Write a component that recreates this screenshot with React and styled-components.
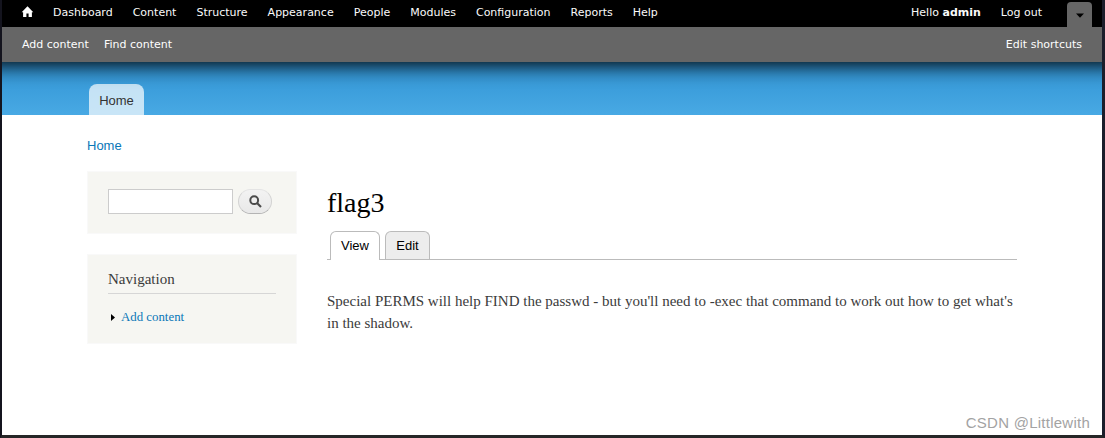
import React from "react";
import styled, { createGlobalStyle } from "styled-components";

const Global = createGlobalStyle`
  * { box-sizing: border-box; }
  body { margin: 0; background: #222226; }
  a { text-decoration: none; color: inherit; }
`;

const Frame = styled.div`
  position: relative;
  width: 1105px;
  height: 438px;
  overflow: hidden;
  border-style: solid;
  border-width: 0 3px 3px 2px;
  border-color: #222 #1b1e2b #262627 #14141e;
  background: #fff;
  color: #3b3b3b;
  font-family: "Liberation Serif", serif;
`;

const Toolbar = styled.div`
  position: relative;
  z-index: 1;
  margin: 0 -20px;
  font: 11px/14px "DejaVu Sans", sans-serif;
  box-shadow: 0 3px 20px #000;
`;

const MenuBar = styled.nav`
  display: flex;
  align-items: flex-start;
  height: 27px;
  padding: 6px 30px 0 39px;
  background: #000;
  color: #fafafa;
`;

const HomeLink = styled.a`
  display: flex;
  width: 13px;
  height: 14px;
  margin-right: 9px;
`;

const MenuLink = styled.a`
  padding: 0 10px;
`;

const UserLinks = styled.div`
  display: flex;
  margin-left: auto;
`;

const DrawerToggle = styled.a`
  display: flex;
  align-items: center;
  justify-content: center;
  width: 25px;
  height: 25px;
  margin: -4px 0 0 15px;
  padding-top: 2px;
  border-radius: 4px 4px 0 0;
  background: #666;
`;

const ShortcutBar = styled.div`
  display: flex;
  gap: 15px;
  height: 35px;
  padding: 11px 40px 0;
  background: #666;
  color: #fefefe;
`;

const EditShortcuts = styled.a`
  margin-left: auto;
`;

const Header = styled.header`
  display: flex;
  align-items: flex-end;
  height: 53px;
  padding-left: 87px;
  background: linear-gradient(#3093d3, #48a9e4);
`;

const MainTab = styled.a`
  width: 55px;
  height: 31px;
  border-radius: 8px 8px 0 0;
  background: rgba(255, 255, 255, 0.7);
  color: #333;
  text-align: center;
  font: 13px/33px "Liberation Sans", sans-serif;
`;

const Breadcrumb = styled.div`
  padding: 22px 0 0 85px;
  height: 56px;
  color: #0a77b8;
  font: 13px/17px "Liberation Sans", sans-serif;
`;

const Columns = styled.div`
  display: flex;
  gap: 30px;
  padding-left: 85px;
`;

const Sidebar = styled.aside`
  display: flex;
  flex-direction: column;
  gap: 20px;
  width: 210px;
`;

const Block = styled.section`
  height: ${(p) => p.$height}px;
  padding: ${(p) => p.$top}px 20px 0;
  border: 1px solid #f9f9f9;
  background: #f6f6f2;
`;

const SearchForm = styled.form`
  display: flex;
  gap: 5px;
`;

const SearchInput = styled.input`
  width: 125px;
  height: 25px;
  padding: 4px;
  border: 1px solid #ccc;
  border-radius: 0;
  background: #fff;
  outline: none;
`;

const SearchButton = styled.button`
  display: flex;
  align-items: center;
  justify-content: center;
  width: 34px;
  height: 25px;
  padding: 0;
  border: 1px solid #e4e4e4;
  border-bottom-color: #b4b4b4;
  border-left-color: #d2d2d2;
  border-right-color: #d2d2d2;
  border-radius: 13px;
  background: linear-gradient(#f3f3f3, #e8e8e8);
`;

const BlockTitle = styled.h2`
  height: 24px;
  margin: 0;
  border-bottom: 1px solid #d6d6d6;
  font-size: 15px;
  font-weight: normal;
  line-height: 19px;
`;

const NavItem = styled.a`
  display: flex;
  align-items: center;
  gap: 6px;
  margin-top: 14px;
  padding-left: 3px;
  color: #0a77b8;
  font-size: 12.85px;
  line-height: 19px;
`;

const Content = styled.main`
  width: 690px;
  padding-top: 15px;
`;

const Title = styled.h1`
  margin: 0;
  color: #000;
  font-size: 28px;
  font-weight: normal;
  line-height: 34px;
`;

const Tabs = styled.div`
  display: flex;
  align-items: flex-end;
  gap: 5px;
  height: 29px;
  margin-top: 11px;
  padding-left: 3px;
  border-bottom: 1px solid #bbb;
`;

const Tab = styled.a`
  width: ${(p) => p.$width}px;
  height: ${(p) => (p.$active ? 29 : 28)}px;
  margin-bottom: ${(p) => (p.$active ? -1 : 0)}px;
  border: 1px solid #bbb;
  border-bottom: 0;
  border-radius: 6px 6px 0 0;
  background: ${(p) => (p.$active ? "#fff" : "#ededed")};
  color: #000;
  text-align: center;
  font: 13px/27px "Liberation Sans", sans-serif;
`;

const Body = styled.p`
  margin: 30px 0 0;
  font-size: 15px;
  line-height: 22px;
`;

const Watermark = styled.div`
  position: absolute;
  right: 12px;
  bottom: 2px;
  color: #a3a3a3;
  font: 15px/20px "Liberation Sans", sans-serif;
  letter-spacing: 0.25px;
  text-shadow: 1px 1px 0 #fff;
`;

const menu = ["Dashboard", "Content", "Structure", "Appearance", "People", "Modules", "Configuration", "Reports", "Help"];

export default function App() {
  return (
    <Frame>
      <Global />
      <Toolbar>
        <MenuBar>
          <HomeLink>
            <svg width="13" height="12" viewBox="0 0 13 12">
              <path d="M6.5 0.2 L12.3 6.2 H10.9 V11 H7.6 V7.4 H5.4 V11 H2.1 V6.2 H0.7 Z" fill="#fff" />
            </svg>
          </HomeLink>
          {menu.map((label) => (
            <MenuLink key={label}>{label}</MenuLink>
          ))}
          <UserLinks>
            <MenuLink>Hello <b>admin</b></MenuLink>
            <MenuLink>Log out</MenuLink>
            <DrawerToggle>
              <svg width="8" height="5" viewBox="0 0 8 5">
                <path d="M0 0.5 H8 L4 4.7 Z" fill="#000" />
              </svg>
            </DrawerToggle>
          </UserLinks>
        </MenuBar>
        <ShortcutBar>
          <a>Add content</a>
          <a>Find content</a>
          <EditShortcuts>Edit shortcuts</EditShortcuts>
        </ShortcutBar>
      </Toolbar>
      <Header>
        <MainTab>Home</MainTab>
      </Header>
      <Breadcrumb>Home</Breadcrumb>
      <Columns>
        <Sidebar>
          <Block $height={63} $top={17}>
            <SearchForm>
              <SearchInput aria-label="Search" />
              <SearchButton type="button" aria-label="Search">
                <svg width="13" height="13" viewBox="0 0 13 13" fill="none" stroke="#4b4b4b">
                  <circle cx="5.2" cy="5.2" r="3.9" strokeWidth="2" />
                  <path d="M8 8 L12 12" strokeWidth="2.2" />
                </svg>
              </SearchButton>
            </SearchForm>
          </Block>
          <Block $height={90} $top={15}>
            <BlockTitle>Navigation</BlockTitle>
            <NavItem>
              <svg width="4" height="7" viewBox="0 0 4 7">
                <path d="M0 0 L4 3.5 L0 7 Z" fill="#000" />
              </svg>
              Add content
            </NavItem>
          </Block>
        </Sidebar>
        <Content>
          <Title>flag3</Title>
          <Tabs>
            <Tab $active $width={50}>View</Tab>
            <Tab $width={45}>Edit</Tab>
          </Tabs>
          <Body>
            Special PERMS will help FIND the passwd - but you'll need to -exec that command to work out how to get what's in the shadow.
          </Body>
        </Content>
      </Columns>
      <Watermark>CSDN @Littlewith</Watermark>
    </Frame>
  );
}
